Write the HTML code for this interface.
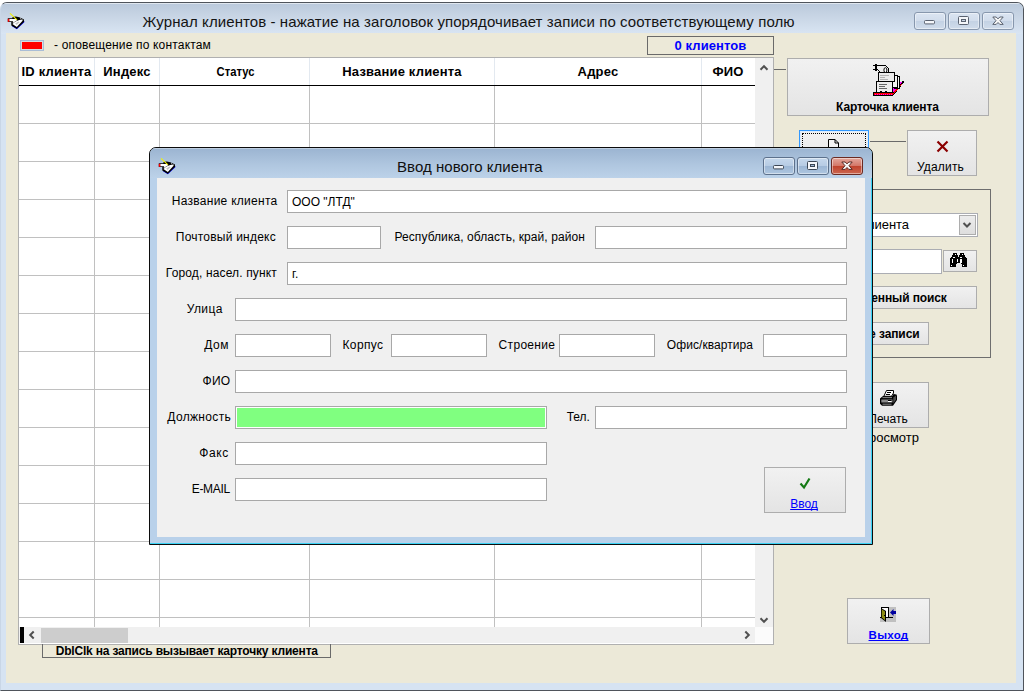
<!DOCTYPE html>
<html lang="ru">
<head>
<meta charset="utf-8">
<title>Журнал клиентов</title>
<style>
html,body{margin:0;padding:0;}
body{width:1026px;height:692px;background:#fff;overflow:hidden;position:relative;
 font-family:"Liberation Sans",sans-serif;font-size:12px;color:#000;}
*{box-sizing:border-box;}
.abs{position:absolute;}
svg{position:absolute;overflow:visible;}
/* main window */
#win{position:absolute;left:0;top:2px;width:1024px;height:689px;border:1px solid #4f545b;border-left-color:#c9d6e6;
 border-radius:7px 7px 0 0;background:#d6e3f2;overflow:hidden;}
#wtitle{position:absolute;left:0;top:0;width:1022px;height:31px;
 background:linear-gradient(#bac9db 0,#c7d4e4 40%,#d9e5f3 100%);box-shadow:inset 0 1px 0 rgba(255,255,255,.55);}
#wcap{position:absolute;left:141.6px;top:10px;font-size:15px;letter-spacing:.085px;line-height:17px;white-space:nowrap;color:#141414;}
#client{position:absolute;left:5px;top:30px;width:1010px;height:650px;background:#ece9d8;}
.cb{position:absolute;top:9px;height:18px;width:32px;border:1px solid #8797ad;border-radius:3px;
 background:linear-gradient(#dbe5f2 0,#d2ddec 47%,#c4d2e4 53%,#d0dceb 100%);box-shadow:inset 0 0 0 1px rgba(255,255,255,.45);}
#page{position:absolute;left:0;top:0;width:1026px;height:692px;}
.btn{position:absolute;border:1px solid #adadad;background:linear-gradient(#f1f1f1,#e4e4e4);}
.lbl{position:absolute;white-space:nowrap;line-height:14px;}
.r{text-align:right;}
.b{font-weight:bold;}
a.lk{color:#0000ff;text-decoration:underline;text-decoration-thickness:1px;text-underline-offset:1px;text-decoration-skip-ink:none;}
/* grid */
#grid{position:absolute;left:18px;top:57px;width:756px;height:588px;background:#fff;border:1px solid #b0b0b0;overflow:hidden;}
.vl{position:absolute;top:28px;width:1px;height:541px;background:#c0c0c0;}
.vh{position:absolute;top:0;width:1px;height:27px;background:#e3e9f0;}
.hl{position:absolute;left:0;width:736px;height:1px;background:#c0c0c0;}
.hd{position:absolute;top:6px;font-weight:bold;font-size:13px;line-height:15px;white-space:nowrap;text-align:center;letter-spacing:.18px;}
/* dialog */
#dlg{position:absolute;left:149px;top:147px;width:724px;height:398px;border:1px solid #0c0c0c;border-radius:7px 7px 0 0;
 background:#b9d1ea;overflow:hidden;box-shadow:inset -1px -1px 0 0 #39d3f5;}
#dtitle{position:absolute;left:0;top:0;width:722px;height:30px;background:linear-gradient(#9bb4d1 0,#afc6df 55%,#bcd2e9 100%);box-shadow:inset 0 1px 0 rgba(255,255,255,.35);}
#dcap{position:absolute;left:247px;top:10px;font-size:15px;letter-spacing:.05px;line-height:17px;white-space:nowrap;color:#101010;}
#dclient{position:absolute;left:7px;top:30px;width:708px;height:359px;background:#f0f0f0;}
.db{position:absolute;top:9px;height:18px;width:32px;border:1px solid #5d718c;border-radius:3px;
 background:linear-gradient(#c6d8ec 0,#b7cce4 47%,#9db7d5 53%,#aec6e0 100%);box-shadow:inset 0 0 0 1px rgba(255,255,255,.45);}
.db.x{border-color:#6b2a22;background:linear-gradient(#e3a79c 0,#d4796a 47%,#c0442e 53%,#cc6650 100%);}
.inp{position:absolute;height:23px;border:1px solid #a8a8a8;background:#fff;padding:5px 0 0 4px;line-height:13px;white-space:nowrap;}
.dl{position:absolute;white-space:nowrap;line-height:14px;text-align:right;letter-spacing:.1px;}
</style>
</head>
<body>
<div id="win">
 <div id="wtitle"></div>
 <div id="wcap">Журнал клиентов - нажатие на заголовок упорядочивает записи по соответствующему полю</div>
 <div class="cb" style="left:913px"><svg style="left:9px;top:7px" width="12" height="5"><rect x=".5" y=".5" width="10" height="3.4" rx="1" fill="#f4f6fa" stroke="#5a6270" stroke-width="1"/></svg></div>
 <div class="cb" style="left:947px"><svg style="left:9px;top:3px" width="12" height="10"><rect x=".5" y=".5" width="10" height="8" rx="1" fill="#f4f6fa" stroke="#5a6270"/><rect x="3.5" y="3.5" width="4" height="2" fill="#c9d4e3" stroke="#5a6270"/></svg></div>
 <div class="cb" style="left:981px"><svg style="left:9px;top:3px" width="12" height="10" viewBox="0 0 12 10"><path d="M0.8,1 L4.2,1 L6,2.9 L7.8,1 L11.2,1 L8,4.7 L11.2,8.4 L7.8,8.4 L6,6.5 L4.2,8.4 L0.8,8.4 L4,4.7 Z" fill="#f6f6f6" stroke="#5a6270" stroke-width="1" stroke-linejoin="round"/></svg></div>
 <div id="client"></div>
</div>
<div id="page">
<svg style="left:8px;top:13px" width="17" height="17" viewBox="0 0 17 17">
<polygon points="4,13.2 8.8,16.3 16.3,9.2 16.3,8 8.8,15 4,12" fill="#0000f0"/>
<polygon points="-0.2,5.2 4.3,5.2 4.6,4 7.8,3.4 11.3,4.2 15.8,6.3 16.1,8.8 8.8,15.7 3.3,12.4 3.3,9 -0.2,9" fill="#000"/>
<polygon points="4.4,10.9 7,8.7 10.5,7.3 13.4,6.5 14.8,7.5 8.8,14.1" fill="#fff"/>
<polygon points="7.2,10.4 10.4,8.4 11.6,9.2 8.6,11.9" fill="#c4c4c4"/>
<polygon points="1.2,6.1 8.2,6.1 9.3,7.2 7,8.4 5.5,9.8 4.6,9.6 5.2,8.2 1.2,8.2" fill="#fff"/>
<rect x="-0.2" y="5.8" width="1.5" height="3" fill="#ff0000"/>
<line x1="2" y1="0.3" x2="9" y2="6.8" stroke="#f2f200" stroke-width="1.1"/>
<rect x="12" y="4.9" width=".8" height=".8" fill="#fff"/><rect x="13.8" y="5.8" width=".8" height=".8" fill="#fff"/>
</svg>
 <div class="abs" style="left:20px;top:40px;width:24px;height:11px;border:1px solid #a9bdd6;background:#ff0000;box-shadow:inset 0 0 0 1px #d8dde0"></div>
 <div class="lbl" style="left:54px;top:38px;letter-spacing:.17px">- оповещение по контактам</div>
 <div class="abs b" style="left:647px;top:36px;width:127px;height:19px;border:1px solid #6a6a6a;color:#0000ff;text-align:center;font-size:13px;line-height:17px;letter-spacing:.08px">0 клиентов</div>
 <div id="grid">
  <div class="abs" style="left:0;top:27px;width:736px;height:1px;background:#000"></div>
  <div class="vl" style="left:75px"></div><div class="vh" style="left:75px"></div>
  <div class="vl" style="left:140px"></div><div class="vh" style="left:140px"></div>
  <div class="vl" style="left:290px"></div><div class="vh" style="left:290px"></div>
  <div class="vl" style="left:475px"></div><div class="vh" style="left:475px"></div>
  <div class="vl" style="left:682px"></div><div class="vh" style="left:682px"></div>
  <div class="hl" style="top:65px"></div>
  <div class="hl" style="top:103px"></div>
  <div class="hl" style="top:141px"></div>
  <div class="hl" style="top:179px"></div>
  <div class="hl" style="top:217px"></div>
  <div class="hl" style="top:255px"></div>
  <div class="hl" style="top:293px"></div>
  <div class="hl" style="top:331px"></div>
  <div class="hl" style="top:369px"></div>
  <div class="hl" style="top:407px"></div>
  <div class="hl" style="top:445px"></div>
  <div class="hl" style="top:483px"></div>
  <div class="hl" style="top:521px"></div>
  <div class="hl" style="top:559px"></div>
  <div class="hd" style="left:0px;width:75px">ID клиента</div>
  <div class="hd" style="left:76px;width:64px">Индекс</div>
  <div class="hd" style="left:141px;width:149px;font-size:12.6px;letter-spacing:0;transform:scaleX(.89);top:7px;margin-left:.6px">Статус</div>
  <div class="hd" style="left:291px;width:184px">Название клиента</div>
  <div class="hd" style="left:476px;width:206px">Адрес</div>
  <div class="hd" style="left:683px;width:52px">ФИО</div>
  <div class="abs" style="left:736px;top:0;width:18px;height:569px;background:#f0f0f0"></div>
  <div class="abs" style="left:0;top:569px;width:736px;height:16px;background:#f0f0f0"></div>
  <div class="abs" style="left:736px;top:569px;width:18px;height:16px;background:#fbfbfb"></div>
  <div class="abs" style="left:1px;top:569px;width:4px;height:16px;background:#000"></div>
  <div class="abs" style="left:22px;top:570px;width:87px;height:15px;background:#cdcdcd"></div>
  <svg style="left:8px;top:572px" width="10" height="10" viewBox="0 0 10 10"><path d="M6.7,1.5 L3.2,5 L6.7,8.5" fill="none" stroke="#505050" stroke-width="2"/></svg>
  <svg style="left:723px;top:572px" width="10" height="10" viewBox="0 0 10 10"><path d="M3.3,1.5 L6.8,5 L3.3,8.5" fill="none" stroke="#505050" stroke-width="2"/></svg>
  <svg style="left:740px;top:5px" width="10" height="10" viewBox="0 0 10 10"><path d="M1.5,6.7 L5,3.2 L8.5,6.7" fill="none" stroke="#505050" stroke-width="2"/></svg>
  <svg style="left:740px;top:557px" width="10" height="10" viewBox="0 0 10 10"><path d="M1.5,3.3 L5,6.8 L8.5,3.3" fill="none" stroke="#505050" stroke-width="2"/></svg>
 </div>
 <div class="abs b" style="left:42px;top:644px;width:289px;height:14px;border:1px solid #6a6a6a;border-top:none;text-align:center;line-height:14px;letter-spacing:-.18px;padding-left:.5px">DblClk на запись вызывает карточку клиента</div>
 <div class="abs" style="left:774px;top:69px;width:12px;height:1px;background:#6a6a6a"></div>
 <div class="btn" style="left:787px;top:58px;width:202px;height:58px"></div>
 <div class="lbl b" style="left:786.4px;width:202px;top:100px;text-align:center;letter-spacing:-.13px">Карточка клиента</div>
<svg style="left:864px;top:58px" width="48" height="42" viewBox="0 0 48 42" shape-rendering="crispEdges">
<polygon points="9,34 29,34 38.5,23 39.6,23 39.6,24.6 29,38 9,38" fill="#000"/>
<polygon points="28,24 38.4,24 29,34.4 26,34.4" fill="#ff00ff"/>
<polygon points="10,35.2 29,35.2 38.3,24.6 38.9,25 29,37 10,37" fill="#ff0000"/>
<path d="M10.5,36.1 H28" stroke="#ff00ff" stroke-width="1" stroke-dasharray="1 1" fill="none"/>
<rect x="30.5" y="18.5" width="4.5" height="11.5" fill="#f4f4f4" stroke="#000"/>
<rect x="28.5" y="17.5" width="4.5" height="11.5" fill="#f4f4f4" stroke="#000"/>
<rect x="14.5" y="14.5" width="16" height="9" fill="#ececec" stroke="#000"/>
<rect x="12.5" y="23.5" width="16" height="11" fill="#ececec" stroke="#000"/>
<rect x="16" y="17" width="9" height="1" fill="#b4b4b4"/><rect x="16" y="19" width="5" height="1" fill="#b4b4b4"/><rect x="16" y="21" width="8" height="1" fill="#b4b4b4"/>
<rect x="15" y="26" width="8" height="1" fill="#666"/><rect x="15" y="28" width="6" height="1" fill="#666"/><rect x="15" y="30" width="8" height="1" fill="#666"/>
<rect x="16" y="32.5" width="2" height="2" fill="#000"/><rect x="21" y="32.5" width="2" height="2" fill="#000"/>
<rect x="11" y="6" width="2" height="7" fill="#000"/>
<path d="M9,7.5 H21.5 L24.5,10.5 V14.5 M9,11.5 H13.5 L16.5,14.5" fill="none" stroke="#000" stroke-width="1"/>
<ellipse cx="21.4" cy="12.1" rx="1.5" ry="2.4" fill="#fff" stroke="#000" shape-rendering="auto"/>
</svg>
 <div class="btn" style="left:799px;top:130px;width:70px;height:46px;border-color:#3399ff;box-shadow:inset 0 0 0 1px #d9ecff"><div class="abs" style="left:2px;top:2px;width:64px;height:40px;border:1px dotted #000"></div></div>
 <svg style="left:828px;top:139px" width="12" height="14" viewBox="0 0 12 14"><path d="M.5,.5 H7 L10.5,4 V13.5 H.5 Z M7,.5 V4 H10.5" fill="#f4f4f4" stroke="#000"/></svg>
 <div class="abs" style="left:870px;top:141px;width:36px;height:1px;background:#6a6a6a"></div>
 <div class="btn" style="left:907px;top:130px;width:70px;height:46px"></div>
 <svg style="left:936px;top:140px" width="13" height="13" viewBox="0 0 13 13"><path d="M1.5,1.5 L11.5,11.5 M11.5,1.5 L1.5,11.5" stroke="#8b0000" stroke-width="2.2" fill="none"/></svg>
 <div class="lbl " style="left:916.9px;top:160px;font:12px 'Liberation Sans';line-height:14px;letter-spacing:0.195px;">Удалить</div>
 <div class="abs" style="left:780px;top:189px;width:211px;height:169px;border:1px solid #6e6e6e"></div>
 <div class="abs" style="left:795px;top:213px;width:183px;height:24px;border:1px solid #abadb3;background:#fff;font-size:13px;line-height:20px;padding-left:5px;letter-spacing:-.05px"><span class="abs" style="right:68px;top:1px;white-space:nowrap">Название клиента</span></div>
 <div class="abs" style="left:959px;top:215px;width:17px;height:20px;border:1px solid #adadad;background:linear-gradient(#ececec,#dedede)"></div>
 <svg style="left:962px;top:220px" width="10" height="10" viewBox="0 0 10 10"><path d="M1.5,3 L5,6.5 L8.5,3" fill="none" stroke="#505050" stroke-width="2"/></svg>
 <div class="abs" style="left:795px;top:249px;width:147px;height:25px;border:1px solid #abadb3;background:#fff"></div>
 <div class="btn" style="left:943px;top:250px;width:34px;height:22px"></div>
<svg style="left:950px;top:253px" width="17" height="14" viewBox="0 0 17 14" shape-rendering="crispEdges">
<g fill="#000"><rect x="3" y="0" width="4" height="2.2"/><rect x="10" y="0" width="4" height="2.2"/>
<rect x="2" y="2" width="6" height="2"/><rect x="9" y="2" width="6" height="2"/>
<rect x="1" y="3.5" width="7" height="2"/><rect x="9" y="3.5" width="7" height="2"/>
<rect x="0" y="5" width="17" height="5"/><rect x="8" y="4" width="1" height="2"/>
<rect x="0" y="10" width="6" height="4"/><rect x="11.5" y="10" width="5.5" height="4"/><rect x="6" y="10" width="1" height="1"/><rect x="10.5" y="10" width="1" height="1"/></g>
<g fill="#fff"><rect x="5" y="1" width="1" height="1"/><rect x="12" y="1" width="1" height="1"/>
<rect x="3" y="4" width="2" height=".9"/><rect x="10" y="4" width="2" height=".9"/>
<rect x="2" y="6" width="1" height="4"/><rect x="7" y="6" width="1" height="3"/><rect x="10" y="6" width="2" height="4"/>
<rect x="1" y="11.5" width="1" height="1.5"/><rect x="13" y="11.5" width="1" height="1.5"/>
<polygon points="7,10 10.5,10 10.5,10.5 9.5,10.5 8.5,9.7 7.8,10.5 7,10.5" fill="#e9e9e9"/></g>
</svg>
 <div class="btn b" style="left:792px;top:286px;width:185px;height:23px;line-height:22px;letter-spacing:-.12px;text-align:center"><span class="abs" style="right:29.3px;top:0;white-space:nowrap">Расширенный поиск</span></div>
 <div class="btn b" style="left:840px;top:322px;width:89px;height:23px;line-height:22px;letter-spacing:-.1px"><span class="abs" style="right:8.5px;top:0;white-space:nowrap">Все записи</span></div>
 <div class="btn" style="left:847px;top:382px;width:82px;height:46px"></div>
<svg style="left:880px;top:389.5px" width="18" height="16" viewBox="0 0 18 16">
<polygon points="0,8.5 3,6 12.5,6 13.5,4 16.5,4.5 17,6 17,10 13,15.7 2,15.7 0,13.7" fill="#000"/>
<polygon points="6.5,0.5 13.5,0.5 13.5,3 11.5,6.3 3.8,6.3" fill="#fff" stroke="#000" stroke-width="1"/>
<path d="M7,2.5 H11 M6,4.5 H10" stroke="#000" stroke-width="1"/>
<rect x="2.5" y="7.2" width="9.5" height=".9" fill="#9a9a9a"/>
<rect x="1.3" y="9.5" width="11.2" height="3" fill="#8a8a8a"/>
<rect x="8" y="10" width="3.5" height="1" fill="#000"/><rect x="8" y="11" width="3.5" height="1" fill="#fff"/>
<rect x="2.5" y="13.7" width="9" height=".9" fill="#9a9a9a"/>
<polygon points="13.3,7.5 16,5.5 16,9.5 13.3,13.5" fill="#4a4a4a"/>
</svg>
 <div class="lbl" style="left:847px;width:82px;top:412px;text-align:center">Печать</div>
 <div class="lbl" style="left:800px;width:119px;top:431px;text-align:right;font-size:13px">просмотр</div>
 <div class="btn" style="left:847px;top:598px;width:83px;height:46px"></div>
<svg style="left:880px;top:607px" width="16" height="15" viewBox="0 0 16 15" shape-rendering="crispEdges">
<rect x="9.4" y="0" width="6.6" height="14.8" fill="#c0c0c0"/><rect x="0" y="11" width="16" height="3.8" fill="#c0c0c0"/>
<rect x="1" y="0" width="8" height="11" fill="#000"/>
<rect x="2" y="1" width="6" height="9.5" fill="#fff"/>
<rect x="0" y="10" width="12.7" height="1" fill="#000"/>
<polygon points="1,1 6,4 6,15 1,11" fill="#000" shape-rendering="auto"/>
<polygon points="1.8,2.3 5,4.4 5,13.2 1.8,10.4" fill="#8e8e12" shape-rendering="auto"/>
<rect x="4" y="8" width="1" height="1" fill="#000"/>
<polygon points="10,5.5 13.5,2 13.5,4 16,4 16,7 13.5,7 13.5,9" fill="#0000a0" shape-rendering="auto"/>
</svg>
 <div class="lbl b" style="left:847px;width:83px;top:628px;text-align:center;font-size:11.5px;letter-spacing:.3px"><a class="lk">Выход</a></div>
 <div id="dlg">
  <div id="dtitle"></div>
  <div id="dcap">Ввод нового клиента</div>
  <div class="db" style="left:613px"><svg style="left:9px;top:7px" width="12" height="5"><rect x=".5" y=".5" width="10" height="3.4" rx="1" fill="#f4f6fa" stroke="#3c4654" stroke-width="1"/></svg></div>
  <div class="db" style="left:647px"><svg style="left:9px;top:3px" width="12" height="10"><rect x=".5" y=".5" width="10" height="8" rx="1" fill="#f4f6fa" stroke="#3c4654"/><rect x="3.5" y="3.5" width="4" height="2" fill="#9fb6d2" stroke="#3c4654"/></svg></div>
  <div class="db x" style="left:681px"><svg style="left:9px;top:3px" width="12" height="10" viewBox="0 0 12 10"><path d="M0.8,1 L4.2,1 L6,2.9 L7.8,1 L11.2,1 L8,4.7 L11.2,8.4 L7.8,8.4 L6,6.5 L4.2,8.4 L0.8,8.4 L4,4.7 Z" fill="#f6f6f6" stroke="#5a2a24" stroke-width="1" stroke-linejoin="round"/></svg></div>
  <div id="dclient"></div>
 </div>
<svg style="left:159px;top:158px" width="17" height="17" viewBox="0 0 17 17">
<polygon points="4,13.2 8.8,16.3 16.3,9.2 16.3,8 8.8,15 4,12" fill="#0000f0"/>
<polygon points="-0.2,5.2 4.3,5.2 4.6,4 7.8,3.4 11.3,4.2 15.8,6.3 16.1,8.8 8.8,15.7 3.3,12.4 3.3,9 -0.2,9" fill="#000"/>
<polygon points="4.4,10.9 7,8.7 10.5,7.3 13.4,6.5 14.8,7.5 8.8,14.1" fill="#fff"/>
<polygon points="7.2,10.4 10.4,8.4 11.6,9.2 8.6,11.9" fill="#c4c4c4"/>
<polygon points="1.2,6.1 8.2,6.1 9.3,7.2 7,8.4 5.5,9.8 4.6,9.6 5.2,8.2 1.2,8.2" fill="#fff"/>
<rect x="-0.2" y="5.8" width="1.5" height="3" fill="#ff0000"/>
<line x1="2" y1="0.3" x2="9" y2="6.8" stroke="#f2f200" stroke-width="1.1"/>
<rect x="12" y="4.9" width=".8" height=".8" fill="#fff"/><rect x="13.8" y="5.8" width=".8" height=".8" fill="#fff"/>
</svg>
 <div class="lbl " style="left:171.8px;top:194px;font:12px 'Liberation Sans';line-height:14px;letter-spacing:0.267px;">Название клиента</div><div class="inp" style="left:287px;top:190px;width:560px;">ООО "ЛТД"</div>
 <div class="lbl " style="left:175.8px;top:230px;font:12px 'Liberation Sans';line-height:14px;letter-spacing:0.225px;">Почтовый индекс</div><div class="inp" style="left:287px;top:226px;width:94px;"></div>
 <div class="lbl " style="left:394.5px;top:230px;font:12px 'Liberation Sans';line-height:14px;letter-spacing:0.071px;">Республика, область, край, район</div><div class="inp" style="left:595px;top:226px;width:252px;"></div>
 <div class="lbl " style="left:165.8px;top:266px;font:12px 'Liberation Sans';line-height:14px;letter-spacing:0.146px;">Город, насел. пункт</div><div class="inp" style="left:287px;top:262px;width:560px;">г.</div>
 <div class="lbl " style="left:186.7px;top:302px;font:12px 'Liberation Sans';line-height:14px;letter-spacing:0.430px;">Улица</div><div class="inp" style="left:235px;top:298px;width:612px;"></div>
 <div class="lbl " style="left:204.2px;top:338px;font:12px 'Liberation Sans';line-height:14px;letter-spacing:0.600px;">Дом</div><div class="inp" style="left:235px;top:334px;width:96px;"></div>
 <div class="lbl " style="left:342.5px;top:338px;font:12px 'Liberation Sans';line-height:14px;letter-spacing:0.379px;">Корпус</div><div class="inp" style="left:391px;top:334px;width:96px;"></div>
 <div class="lbl " style="left:498.6px;top:338px;font:12px 'Liberation Sans';line-height:14px;letter-spacing:0.316px;">Строение</div><div class="inp" style="left:559px;top:334px;width:96px;"></div>
 <div class="lbl " style="left:666.8px;top:338px;font:12px 'Liberation Sans';line-height:14px;letter-spacing:0.069px;">Офис/квартира</div><div class="inp" style="left:763px;top:334px;width:84px;"></div>
 <div class="lbl " style="left:202.6px;top:374px;font:12px 'Liberation Sans';line-height:14px;letter-spacing:0.253px;">ФИО</div><div class="inp" style="left:235px;top:370px;width:612px;"></div>
 <div class="lbl " style="left:167.3px;top:410px;font:12px 'Liberation Sans';line-height:14px;letter-spacing:0.344px;">Должность</div><div class="inp" style="left:235px;top:406px;width:312px;background:#80ff80;box-shadow:inset 0 0 0 1px #fff"></div>
 <div class="lbl " style="left:566.7px;top:410px;font:12px 'Liberation Sans';line-height:14px;letter-spacing:-0.060px;">Тел.</div><div class="inp" style="left:595px;top:406px;width:252px;"></div>
 <div class="lbl " style="left:199.2px;top:446px;font:12px 'Liberation Sans';line-height:14px;letter-spacing:0.600px;">Факс</div><div class="inp" style="left:235px;top:442px;width:312px;"></div>
 <div class="lbl " style="left:191.7px;top:482px;font:12px 'Liberation Sans';line-height:14px;letter-spacing:-0.303px;">E-MAIL</div><div class="inp" style="left:235px;top:478px;width:312px;"></div>
 <div class="btn" style="left:764px;top:467px;width:82px;height:46px"></div>
 <svg style="left:799px;top:477px" width="13" height="13" viewBox="0 0 13 13"><path d="M1.5,6.5 L5,10.5 L10.5,1.5" stroke="#157a15" stroke-width="2.2" fill="none"/></svg>
 <div class="lbl" style="left:763px;width:82px;top:497px;text-align:center"><a class="lk">Ввод</a></div>
</div>
</body>
</html>
